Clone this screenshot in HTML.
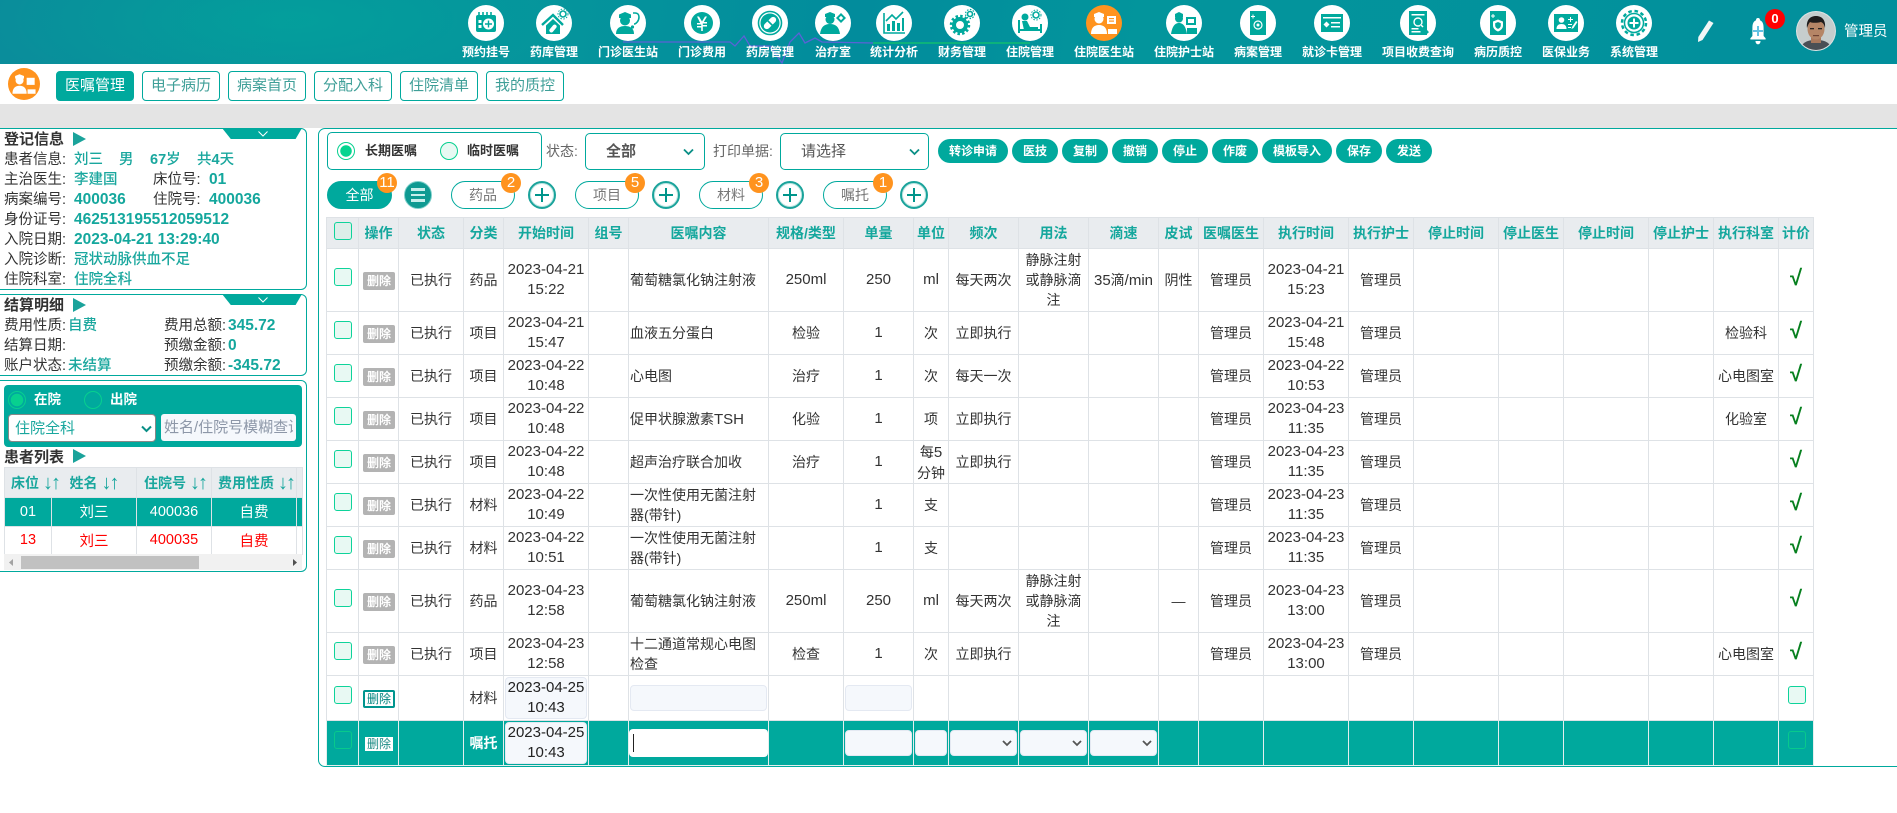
<!DOCTYPE html>
<html lang="zh-CN"><head><meta charset="utf-8"><title>住院医生站</title>
<style>
*{box-sizing:border-box}
html,body{margin:0;padding:0;background:#fff}
body{width:1897px;height:813px;overflow:hidden;position:relative;font-family:"Liberation Sans","Noto Sans CJK SC",sans-serif;font-size:14px;color:#333}
.a{position:absolute}
#top{left:0;top:0;width:1897px;height:64px;background:radial-gradient(ellipse 300px 90px at 290px 20px,rgba(0,170,155,.55),transparent),linear-gradient(100deg,#0a8d9b 0,#05949c 30%,#028c9c 45%,#03959c 60%,#028f9c 100%);overflow:hidden}
.n{position:absolute;top:5px;width:100px;margin-left:-50px;text-align:center;color:#fff;font-size:12px;font-weight:700;line-height:16px}
.n svg{display:block;margin:0 auto 3px;width:36px;height:36px;border-radius:50%;background:#fff;fill:#00a99d;stroke:none}
.n svg.o{background:#ff931e;fill:#fff}
.n svg .s{fill:none;stroke:#00a99d;stroke-width:1.6}
.n svg .w{fill:#fff}
.n svg .t{fill:#00a99d}
.o .w{fill:#ff931e!important}
.tab{position:absolute;top:71px;width:78px;height:30px;border:1px solid #00a99d;border-radius:4px;color:#3f9f98;font-size:15px;line-height:28px;text-align:center}
.tab.on{background:#00a99d;color:#fff}
.box{position:absolute;left:0;width:307px;border:1px solid #00a99d;border-left:0;border-radius:0 6px 6px 0}
.trap{position:absolute;left:222px;width:80px;height:11px;background:#00a99d;clip-path:polygon(0 0,100% 0,92% 100%,11% 100%)}
.ch{position:absolute;width:10px;height:6px}
.tri{position:absolute;left:73px;width:0;height:0;border-left:13px solid #1aa39b;border-top:7px solid transparent;border-bottom:7px solid transparent}
.l{position:absolute;font-size:14.5px;line-height:20px;white-space:nowrap;color:#333}
.h{position:absolute;left:4px;font-size:15px;line-height:20px;font-weight:700;color:#333;white-space:nowrap}
.v{position:absolute;font-size:14.5px;line-height:20px;white-space:nowrap;color:#1aa79e;font-weight:500}
.vb{font-weight:700;font-size:15.5px;color:#14a79d}
#pt{position:absolute;left:4px;top:467px;width:298px;border-collapse:collapse;table-layout:fixed}
#pt th{height:30px;background:#e9ecef;color:#1aa79e;font-size:14px;font-weight:700;padding:0;border:1px solid #dee2e6;white-space:nowrap;text-align:left}
#pt th i{font-style:normal;font-weight:400;font-size:20px;letter-spacing:-2px;margin-left:4px;line-height:14px;vertical-align:-1px}
#pt td{padding:0;text-align:center;font-size:14.5px;border:1px solid #dee2e6;height:28.5px}
#pp::placeholder{color:#8d97a8}
.sel{position:absolute;top:133px;height:37px;border:1px solid #00a99d;border-radius:5px;appearance:none;-webkit-appearance:none;background:#fff;font:15px "Liberation Sans","Noto Sans CJK SC",sans-serif;color:#555;padding:0 0 0 20px;margin:0}
.btn{position:absolute;top:139px;height:24px;border-radius:12px;background:#00a99d;color:#fff;font-size:12px;font-weight:700;line-height:24px;text-align:center}
.pill{position:absolute;top:181px;width:64px;height:28px;border:1px solid #00a99d;border-radius:14px;color:#777;font-size:14px;line-height:27px;text-align:center}
.bd{position:absolute;top:173px;width:20px;height:20px;margin-left:-10px;border-radius:50%;background:#ff931e;color:#fff;font-size:15px;line-height:20px;text-align:center}
.pl{position:absolute;top:181px;width:28px;height:28px;margin-left:-14px;border-radius:50%;border:2px solid #1aa39b;outline:0;box-shadow:inset 0 0 0 1px #bfe7e3}
.pl:before,.pl:after{content:"";position:absolute;background:#00958b}
.pl:before{left:5px;right:5px;top:11px;height:2px}
.pl:after{top:5px;bottom:5px;left:11px;width:2px}
#t{position:absolute;left:326px;top:217px;width:1487px;border-collapse:collapse;table-layout:fixed}
#t th{background:#e9ecef;color:#14a79d;font-weight:700;font-size:14px;padding:0;border:1px solid #dee2e6;height:31px;white-space:nowrap;overflow:hidden}
#t td{padding:0 2px;border:1px solid #dee2e6;text-align:center;vertical-align:middle;line-height:20px;font-size:14px;color:#333;position:relative}
#t td.c{text-align:left;padding:0 8px 0 1px}
#t .d,#t .la{font-size:15px}
#t tr.r43 td{height:43px}#t tr.r63 td{height:63px}#t tr.r45 td{height:45px}
#t tr.sel1 td{background:#00a99d;color:#fff;border-color:#e4efee}
.cb{position:absolute;left:7px;top:50%;margin-top:-12.5px;width:18px;height:18px;border:1.5px solid #0ed39a;border-radius:3px;background:#e8f9f3}
.cb.e{background:transparent;border-color:#08c98c}
.del{position:absolute;left:4px;top:50%;margin-top:-8.5px;width:32px;height:18px;border-radius:2px;background:#b3b3b3;color:#fff;font-size:12px;font-weight:700;line-height:18px;text-align:center}
.del.b{background:#fff;border:2px solid #00958f;color:#00857f;line-height:14px;font-weight:400}
.del.w{left:6px;width:28px;height:14px;margin-top:-6px;background:#fff;color:#1c8b85;line-height:14px;border-radius:0;font-weight:400}
.ok{color:#07801f;font-size:22px;font-weight:700;line-height:20px;display:block;margin-top:-5px}
.ip{position:absolute;background:#f5f8fc;border:1px solid #e4e9f2;border-radius:4px;margin:0;padding:0;font:15px/20px "Liberation Sans","Noto Sans CJK SC",sans-serif;color:#222;text-align:center}
.ip.s{appearance:none;-webkit-appearance:none}
</style></head><body>

<div class="a" id="top">
<svg class="a" style="left:0;top:0" width="1100" height="64" fill="none"><polyline points="623,42 730,42 735,46 744,36 750,46 770,46 782,63 790,42 799,33 805,43 815,38 822,42 873,43" stroke="#5a62d6" stroke-width="1.3"/><polyline points="873,43 1030,43" stroke="#12c76a" stroke-width="1.3"/></svg>

<div class="n" style="left:486px"><svg viewBox="0 0 36 36"><rect x="8" y="10" width="20" height="17" rx="2"/><path class="s" d="M11 7v5M15 7v5M19 7v5M23 7v5" stroke-width="1.5"/><rect class="w" x="10.500" y="15" width="3" height="3"/><rect class="w" x="10.500" y="20" width="3" height="3"/><circle class="w" cx="20.500" cy="19" r="5.500"/><path class="t" d="M19.800 15.500h1.400v2.800H24v1.400h-2.800v2.800h-1.400v-2.800H17v-1.400h2.800z"/></svg>预约挂号</div>

<div class="n" style="left:554px"><svg viewBox="0 0 36 36"><path class="s" style="stroke-width:2.400" d="M6 20 17 10l10 10"/><path d="M10 20.500 17 14l7 6.500V29H10z"/><rect class="w" x="15" y="19" width="4" height="9" rx="2" transform="rotate(40 17 23.500)"/><circle class="s" cx="27" cy="9" r="3"/><circle class="s" cx="27" cy="9" r="5" stroke-dasharray="1.500 1.500" style="stroke-width:1"/></svg>药库管理</div>

<div class="n" style="left:628px"><svg viewBox="0 0 36 36"><path d="M9 9.500 15 7l6 2.500V13H9z"/><circle cx="15" cy="15.500" r="5"/><path d="M6 29c0-6 4-8 9-8s9 2 9 8z"/><path class="s" d="M23 8h2c3 0 4 2 4 4 0 4-3 7-5 7"/><circle cx="22.500" cy="22" r="1.600"/></svg>门诊医生站</div>

<div class="n" style="left:702px"><svg viewBox="0 0 36 36"><circle cx="18" cy="18" r="11"/><path class="w" d="M13 11.500h2l3 5 3-5h2l-3.200 5.500H23v1.500h-4.200v1.500H23v1.500h-4.200V26h-1.600v-3.500H13V21h4.200v-1.500H13V18h3.200z"/></svg>门诊费用</div>

<div class="n" style="left:770px"><svg viewBox="0 0 36 36"><circle class="s" cx="18" cy="18" r="11.500"/><circle cx="18" cy="18" r="9.500"/><rect class="w" x="15" y="10.500" width="6" height="15" rx="3" transform="rotate(45 18 18)"/><path class="s" d="M15 15l6 6"/></svg>药房管理</div>

<div class="n" style="left:833px"><svg viewBox="0 0 36 36"><path d="M10 9 15 7l5 2v3H10z"/><circle cx="15" cy="14.500" r="4.500"/><path d="M5 29c1-7 4-10 10-10s9 3 10 10z"/><path d="M26 8l5 5-5 5-5-5z"/><path class="w" d="M26 10.800l2.200 2.200-2.200 2.200-2.200-2.200z"/></svg>治疗室</div>

<div class="n" style="left:894px"><svg viewBox="0 0 36 36"><path class="s" d="M8 8v20h21"/><rect x="11" y="19" width="3" height="7"/><rect x="16" y="16" width="3" height="10"/><rect x="21" y="18" width="3" height="8"/><rect x="26" y="13" width="2" height="13"/><path class="s" d="M10 16l6-6 4 4 7-7"/></svg>统计分析</div>

<div class="n" style="left:962px"><svg viewBox="0 0 36 36"><circle class="s" cx="16" cy="20" r="6" style="stroke-width:4"/><circle class="s" cx="16" cy="20" r="9" style="stroke-width:2.500" stroke-dasharray="2.500 2.200"/><circle class="s" cx="26" cy="9" r="2.500"/><circle class="s" cx="26" cy="9" r="4.500" style="stroke-width:1.200" stroke-dasharray="1.500 1.500"/></svg>财务管理</div>

<div class="n" style="left:1030px"><svg viewBox="0 0 36 36"><circle cx="13" cy="12" r="3.500"/><path d="M10 16h5l3 6h8v3H12z"/><path class="s" style="stroke-width:2" d="M7 15v13M7 25h22v3M29 19v9"/><circle class="s" cx="24" cy="10" r="3"/><circle class="s" cx="24" cy="10" r="5" style="stroke-width:1" stroke-dasharray="1.500 1.500"/></svg>住院管理</div>

<div class="n" style="left:1104px"><svg class="o" viewBox="0 0 36 36"><path d="M8 9l5-2 5 2v3H8z"/><circle cx="13" cy="14" r="4.500"/><path d="M5 29c0-6 3-9 8-9s8 3 8 9z"/><rect x="21" y="11" width="9" height="8"/><rect class="w" x="23" y="13" width="5" height="1.200"/><rect class="w" x="23" y="15.500" width="5" height="1.200"/><rect x="22" y="24" width="9" height="5"/></svg>住院医生站</div>

<div class="n" style="left:1184px"><svg viewBox="0 0 36 36"><path d="M9 9l4-2 4 2v3H9z"/><circle cx="13" cy="13.500" r="4"/><path d="M5 29c1-6 3-11 8-11s7 5 8 11z"/><rect x="20" y="12" width="10" height="8"/><rect class="w" x="22" y="14" width="6" height="4"/><rect x="21" y="23" width="10" height="6"/></svg>住院护士站</div>

<div class="n" style="left:1258px"><svg viewBox="0 0 36 36"><rect x="10" y="6" width="16" height="24"/><path class="w" d="M12.500 9.500h1v1.500H15v1h-1.500v1.500h-1V12H11v-1h1.500z"/><circle cx="18" cy="20" r="4" fill="none" stroke="#fff" stroke-width="1.200"/><circle class="w" cx="18" cy="20" r="1.500"/></svg>病案管理</div>

<div class="n" style="left:1332px"><svg viewBox="0 0 36 36"><rect x="7" y="9" width="22" height="18"/><rect class="w" x="9" y="12" width="18" height="1.500"/><path class="w" d="M12.500 16.500l3 3-3 3-3-3z"/><rect class="w" x="17" y="17" width="9" height="1.500"/><rect class="w" x="17" y="21" width="9" height="1.500"/></svg>就诊卡管理</div>

<div class="n" style="left:1418px"><svg viewBox="0 0 36 36"><rect x="9" y="6" width="18" height="24"/><rect class="w" x="11.500" y="9" width="13" height="1.500"/><circle cx="18" cy="17" r="4" fill="none" stroke="#fff" stroke-width="1.400"/><path d="M21 20l7 8" stroke="#00a99d" stroke-width="2.500"/><path d="M21 20l2 2" stroke="#fff" stroke-width="1.500"/><rect class="w" x="11.500" y="23" width="7" height="1.500"/><rect class="w" x="11.500" y="26" width="9" height="1.500"/></svg>项目收费查询</div>

<div class="n" style="left:1498px"><svg viewBox="0 0 36 36"><rect x="10" y="6" width="16" height="24"/><path class="w" d="M12.500 9h1v1.500H15v1h-1.500V13h-1v-1.500H11v-1h1.500z"/><path class="w" d="M18 14.500l5 2v4c0 3-2.500 5-5 6-2.500-1-5-3-5-6v-4z"/><path class="t" d="M18 17l2.800 1.200v2.300c0 1.600-1.400 2.800-2.800 3.400-1.400-.6-2.800-1.800-2.800-3.400v-2.300z"/></svg>病历质控</div>

<div class="n" style="left:1566px"><svg viewBox="0 0 36 36"><rect x="6" y="9" width="24" height="18"/><circle class="w" cx="13.500" cy="15" r="2.800"/><path class="w" d="M8.500 24c0-3.500 2-5 5-5s5 1.500 5 5z"/><path class="w" d="M22 12h1v2h2v1h-2v2h-1v-2h-2v-1h2z"/><rect class="w" x="20" y="19" width="4" height="1"/><rect class="w" x="20" y="22" width="3" height="1"/><path class="w" d="M28 16l1.500 1-4 6-2 1 .5-2z"/></svg>医保业务</div>

<div class="n" style="left:1634px"><svg viewBox="0 0 36 36"><circle class="s" cx="18" cy="18" r="9.500" style="stroke-width:1.500"/><circle class="s" cx="18" cy="18" r="12" style="stroke-width:2.500" stroke-dasharray="3.500 2.800"/><circle cx="18" cy="18" r="6.500"/><path class="w" d="M17 13.500h2V17h3.500v2H19v3.500h-2V19h-3.500v-2H17z"/></svg>系统管理</div>

<svg class="a" style="left:1696px;top:19px" width="20" height="25"><path d="M13 1.500l4.500 2.500-11 17-4.500 2 .3-5z" fill="#f2f6f6"/></svg>
<svg class="a" style="left:1747px;top:17px" width="22" height="28"><path d="M11 1c1.500 0 2 1 2 2.200 3 1.300 3.600 4.300 3.600 8v7.800l2 2.200v1.300H3.400v-1.300l2-2.200v-7.800c0-3.700.6-6.700 3.600-8C9 2 9.500 1 11 1z" fill="#fff"/><path d="M8.500 24h5c0 2-1 3.300-2.500 3.300S8.500 26 8.500 24z" fill="#fff"/><path d="M10 9h2v4h4v2h-4v4h-2v-4H6v-2h4z" fill="#63c2e4"/></svg>
<div class="a" style="left:1765px;top:9px;width:20px;height:20px;border-radius:50%;background:#f00;color:#fff;font-size:13px;font-weight:700;line-height:20px;text-align:center">0</div>
<svg class="a" style="left:1796px;top:11px" width="40" height="40"><defs><clipPath id="av"><circle cx="20" cy="20" r="19"/></clipPath></defs><circle cx="20" cy="20" r="20" fill="#dfe3e3"/><g clip-path="url(#av)"><rect width="40" height="40" fill="#c6cdcd"/><path d="M4 40c1-9 8-11 16-11s15 2 16 11z" fill="#4a4f55"/><rect x="15" y="24" width="10" height="8" fill="#a9785c"/><ellipse cx="20" cy="18" rx="8.500" ry="10.500" fill="#b58566"/><path d="M11 17c-1-9 4-12 9-12s10 3 9 12c-1-4-2-5-4-6-4 1-9 1-11 0-1 1-2 3-3 6z" fill="#1f1c1c"/><rect x="14" y="17" width="4" height="1.300" fill="#2a2320"/><rect x="22" y="17" width="4" height="1.300" fill="#2a2320"/><rect x="17" y="24" width="6" height="1.200" fill="#6e4233"/></g></svg>
<div class="a" style="left:1844px;top:21px;color:#fff;font-size:14.5px;line-height:22px;white-space:nowrap">管理员</div>
</div>

<svg class="a" style="left:8px;top:68px;border-radius:50%;background:#ff931e" width="32" height="32" viewBox="0 0 36 36" fill="#fff"><path d="M8 9l5-2 5 2v3H8z"/><circle cx="13" cy="14" r="4.500"/><path d="M5 29c0-6 3-9 8-9s8 3 8 9z"/><rect x="21" y="11" width="9" height="8"/><rect x="22" y="24" width="9" height="5"/></svg>
<div class="tab on" style="left:56px">医嘱管理</div>
<div class="tab" style="left:142px">电子病历</div>
<div class="tab" style="left:228px">病案首页</div>
<div class="tab" style="left:314px">分配入科</div>
<div class="tab" style="left:400px">住院清单</div>
<div class="tab" style="left:486px">我的质控</div>

<div class="a" style="left:0;top:104px;width:1897px;height:24px;background:#e4e4e4"></div>

<!-- left: registration -->
<div class="box" style="top:128px;height:162px"></div>
<div class="trap" style="top:128px"></div>
<svg class="ch" style="left:258px;top:131px"><path d="M.5 .5 5 5l4.500-4.500" fill="none" stroke="#fff"/></svg>
<div class="h" style="top:130px">登记信息</div><div class="tri" style="top:132px"></div>
<div class="l" style="left:4px;top:150px">患者信息:</div><div class="v" style="left:74px;top:150px">刘三</div><div class="v" style="left:119px;top:150px">男</div><div class="v" style="left:150px;top:150px"><b>67</b>岁</div><div class="v" style="left:197px;top:150px">共<b>4</b>天</div>
<div class="l" style="left:4px;top:170px">主治医生:</div><div class="v" style="left:74px;top:170px">李建国</div><div class="l" style="left:153px;top:170px">床位号:</div><div class="v vb" style="left:209px;top:170px">01</div>
<div class="l" style="left:4px;top:190px">病案编号:</div><div class="v vb" style="left:74px;top:190px">400036</div><div class="l" style="left:153px;top:190px">住院号:</div><div class="v vb" style="left:209px;top:190px">400036</div>
<div class="l" style="left:4px;top:210px">身份证号:</div><div class="v vb" style="left:74px;top:210px">462513195512059512</div>
<div class="l" style="left:4px;top:230px">入院日期:</div><div class="v vb" style="left:74px;top:230px">2023-04-21 13:29:40</div>
<div class="l" style="left:4px;top:250px">入院诊断:</div><div class="v" style="left:74px;top:250px">冠状动脉供血不足</div>
<div class="l" style="left:4px;top:270px">住院科室:</div><div class="v" style="left:74px;top:270px">住院全科</div>

<!-- left: settlement -->
<div class="box" style="top:294px;height:82px"></div>
<div class="trap" style="top:294px"></div>
<svg class="ch" style="left:258px;top:297px"><path d="M.5 .5 5 5l4.500-4.500" fill="none" stroke="#fff"/></svg>
<div class="h" style="top:296px">结算明细</div><div class="tri" style="top:298px"></div>
<div class="l" style="left:4px;top:316px">费用性质:</div><div class="v" style="left:68px;top:316px">自费</div><div class="l" style="left:164px;top:316px">费用总额:</div><div class="v vb" style="left:228px;top:316px">345.72</div>
<div class="l" style="left:4px;top:336px">结算日期:</div><div class="l" style="left:164px;top:336px">预缴金额:</div><div class="v vb" style="left:228px;top:336px">0</div>
<div class="l" style="left:4px;top:356px">账户状态:</div><div class="v" style="left:68px;top:356px">未结算</div><div class="l" style="left:164px;top:356px">预缴余额:</div><div class="v vb" style="left:228px;top:356px">-345.72</div>

<!-- left: patients -->
<div class="box" style="top:380px;height:192px"></div>
<div class="a" style="left:4px;top:385px;width:298px;height:62px;background:#00a99d;border-radius:4px"></div>
<div class="a" style="left:8px;top:391px;width:18px;height:18px;border-radius:50%;border:1px solid #07d08f;background:radial-gradient(circle,#07d08f 0 6px,#00a99d 6.500px)"></div>
<div class="a" style="left:34px;top:390px;color:#fff;font-weight:700;font-size:13.500px;line-height:20px">在院</div>
<div class="a" style="left:84px;top:391px;width:18px;height:18px;border-radius:50%;border:1px solid #07d08f"></div>
<div class="a" style="left:110px;top:390px;color:#fff;font-weight:700;font-size:13.500px;line-height:20px">出院</div>
<select class="a" style="left:8px;top:414px;width:148px;height:28px;border:1px solid #888;border-radius:4px;background:#fff;color:#1aa79e;font:15px 'Liberation Sans','Noto Sans CJK SC',sans-serif;padding:0 0 0 6px;margin:0;appearance:none;-webkit-appearance:none"><option>住院全科</option></select>
<svg class="a" style="left:141px;top:425px" width="11" height="8"><path d="M1 1.500l4.500 4.500L10 1.500" fill="none" stroke="#0a8f86" stroke-width="2"/></svg>
<input id="pp" class="a" style="left:161px;top:414px;width:135px;height:27px;border:0;border-radius:3px;background:#f5f8fc;font:15px 'Liberation Sans','Noto Sans CJK SC',sans-serif;padding:0 3px;margin:0" placeholder="姓名/住院号模糊查询">
<div class="h" style="top:448px">患者列表</div><div class="tri" style="top:449px"></div>
<table id="pt"><colgroup><col style="width:47px"><col style="width:85px"><col style="width:75px"><col style="width:85px"><col style="width:6px"></colgroup>
<tr><th style="padding-left:6px;border-right:0">床位<i>↓↑</i></th><th style="padding-left:18px;border-left:0">姓名<i>↓↑</i></th><th style="padding-left:7px">住院号<i>↓↑</i></th><th style="padding-left:6px">费用性质<i>↓↑</i></th><th></th></tr>
<tr style="background:#00a99d;color:#fff"><td>01</td><td>刘三</td><td>400036</td><td>自费</td><td></td></tr>
<tr style="color:#f00"><td>13</td><td>刘三</td><td>400035</td><td>自费</td><td></td></tr>
</table>
<div class="a" style="left:4px;top:554px;width:298px;height:16px;background:#f1f1f1"></div>
<div class="a" style="left:21px;top:556px;width:178px;height:13px;background:#c1c1c1"></div>
<svg class="a" style="left:8px;top:558px" width="8" height="9"><path d="M5 1 1 4.500 5 8z" fill="#a3a3a3"/></svg>
<svg class="a" style="left:291px;top:558px" width="8" height="9"><path d="M2 1l4 3.500L2 8z" fill="#505050"/></svg>

<!-- main panel -->
<div class="a" style="left:318px;top:128px;width:1600px;height:639px;border:1px solid #00a99d;border-radius:7px 0 0 7px"></div>

<div class="a" style="left:327px;top:132px;width:215px;height:38px;border:1px solid #00a99d;border-radius:5px"></div>
<div class="a" style="left:337px;top:142px;width:18px;height:18px;border-radius:50%;border:1.500px solid #07d08f;background:radial-gradient(circle,#04d48f 0 5.500px,#fff 6px)"></div>
<div class="a" style="left:365px;top:141px;font-size:13px;font-weight:700;line-height:20px;color:#333">长期医嘱</div>
<div class="a" style="left:440px;top:142px;width:18px;height:18px;border-radius:50%;border:1.500px solid #07d08f;background:#e8f9f3"></div>
<div class="a" style="left:467px;top:141px;font-size:13px;font-weight:700;line-height:20px;color:#333">临时医嘱</div>
<div class="a" style="left:546px;top:141px;color:#666;line-height:20px">状态:</div>
<select class="sel" style="left:585px;width:120px;font-weight:700"><option>全部</option></select>
<svg class="a" style="left:683px;top:148px" width="11" height="8"><path d="M1 1.500l4.500 4.500L10 1.500" fill="none" stroke="#0a8f86" stroke-width="1.800"/></svg>
<div class="a" style="left:713px;top:141px;color:#666;line-height:20px">打印单据:</div>
<select class="sel" style="left:780px;width:149px"><option>请选择</option></select>
<svg class="a" style="left:909px;top:148px" width="11" height="8"><path d="M1 1.500l4.500 4.500L10 1.500" fill="none" stroke="#0a8f86" stroke-width="1.800"/></svg>

<div class="btn" style="left:938px;width:70px">转诊申请</div>
<div class="btn" style="left:1012px;width:46px">医技</div>
<div class="btn" style="left:1062px;width:46px">复制</div>
<div class="btn" style="left:1112px;width:46px">撤销</div>
<div class="btn" style="left:1162px;width:46px">停止</div>
<div class="btn" style="left:1212px;width:46px">作废</div>
<div class="btn" style="left:1262px;width:70px">模板导入</div>
<div class="btn" style="left:1336px;width:46px">保存</div>
<div class="btn" style="left:1386px;width:46px">发送</div>

<div class="pill" style="left:327px;width:65px;background:#00a99d;color:#fff">全部</div>
<div class="bd" style="left:387px">11</div>
<div class="a" style="left:404px;top:181px;width:28px;height:28px;border-radius:50%;background:#0f9a92;border:1px solid #7fd0cb"></div>
<div class="a" style="left:411px;top:188px;width:14px;height:2.500px;background:#c9efec"></div>
<div class="a" style="left:411px;top:193.500px;width:14px;height:2.500px;background:#c9efec"></div>
<div class="a" style="left:411px;top:199px;width:14px;height:2.500px;background:#c9efec"></div>
<div class="pill" style="left:451px">药品</div><div class="bd" style="left:511px">2</div><div class="pl" style="left:542px"></div>
<div class="pill" style="left:575px">项目</div><div class="bd" style="left:635px">5</div><div class="pl" style="left:666px"></div>
<div class="pill" style="left:699px">材料</div><div class="bd" style="left:759px">3</div><div class="pl" style="left:790px"></div>
<div class="pill" style="left:823px">嘱托</div><div class="bd" style="left:883px">1</div><div class="pl" style="left:914px"></div>

<table id="t"><colgroup><col style="width:32px"><col style="width:40px"><col style="width:65px"><col style="width:40px"><col style="width:85px"><col style="width:40px"><col style="width:140px"><col style="width:75px"><col style="width:70px"><col style="width:35px"><col style="width:70px"><col style="width:70px"><col style="width:70px"><col style="width:40px"><col style="width:65px"><col style="width:85px"><col style="width:65px"><col style="width:85px"><col style="width:65px"><col style="width:85px"><col style="width:65px"><col style="width:65px"><col style="width:35px"></colgroup>
<tr><th style="position:relative"><span class="cb" style="top:4px;margin:0;background:#dceee9"></span></th><th>操作</th><th>状态</th><th>分类</th><th>开始时间</th><th>组号</th><th>医嘱内容</th><th>规格/类型</th><th>单量</th><th>单位</th><th>频次</th><th>用法</th><th>滴速</th><th>皮试</th><th>医嘱医生</th><th>执行时间</th><th>执行护士</th><th>停止时间</th><th>停止医生</th><th>停止时间</th><th>停止护士</th><th>执行科室</th><th>计价</th></tr>

<tr class="r63"><td><span class="cb"></span></td><td><span class="del">删除</span></td><td>已执行</td><td>药品</td><td class="d">2023-04-21<br>15:22</td><td></td><td class="c">葡萄糖氯化钠注射液</td><td class="la">250ml</td><td class="la">250</td><td class="la">ml</td><td>每天两次</td><td>静脉注射<br>或静脉滴<br>注</td><td><span class="la">35</span>滴<span class="la">/min</span></td><td>阴性</td><td>管理员</td><td class="d">2023-04-21<br>15:23</td><td>管理员</td><td></td><td></td><td></td><td></td><td></td><td><span class="ok">√</span></td></tr>

<tr class="r43"><td><span class="cb"></span></td><td><span class="del">删除</span></td><td>已执行</td><td>项目</td><td class="d">2023-04-21<br>15:47</td><td></td><td class="c">血液五分蛋白</td><td>检验</td><td class="la">1</td><td>次</td><td>立即执行</td><td></td><td></td><td></td><td>管理员</td><td class="d">2023-04-21<br>15:48</td><td>管理员</td><td></td><td></td><td></td><td></td><td>检验科</td><td><span class="ok">√</span></td></tr>

<tr class="r43"><td><span class="cb"></span></td><td><span class="del">删除</span></td><td>已执行</td><td>项目</td><td class="d">2023-04-22<br>10:48</td><td></td><td class="c">心电图</td><td>治疗</td><td class="la">1</td><td>次</td><td>每天一次</td><td></td><td></td><td></td><td>管理员</td><td class="d">2023-04-22<br>10:53</td><td>管理员</td><td></td><td></td><td></td><td></td><td>心电图室</td><td><span class="ok">√</span></td></tr>

<tr class="r43"><td><span class="cb"></span></td><td><span class="del">删除</span></td><td>已执行</td><td>项目</td><td class="d">2023-04-22<br>10:48</td><td></td><td class="c">促甲状腺激素<span class="la">TSH</span></td><td>化验</td><td class="la">1</td><td>项</td><td>立即执行</td><td></td><td></td><td></td><td>管理员</td><td class="d">2023-04-23<br>11:35</td><td>管理员</td><td></td><td></td><td></td><td></td><td>化验室</td><td><span class="ok">√</span></td></tr>

<tr class="r43"><td><span class="cb"></span></td><td><span class="del">删除</span></td><td>已执行</td><td>项目</td><td class="d">2023-04-22<br>10:48</td><td></td><td class="c">超声治疗联合加收</td><td>治疗</td><td class="la">1</td><td>每<span class="la">5</span><br>分钟</td><td>立即执行</td><td></td><td></td><td></td><td>管理员</td><td class="d">2023-04-23<br>11:35</td><td>管理员</td><td></td><td></td><td></td><td></td><td></td><td><span class="ok">√</span></td></tr>

<tr class="r43"><td><span class="cb"></span></td><td><span class="del">删除</span></td><td>已执行</td><td>材料</td><td class="d">2023-04-22<br>10:49</td><td></td><td class="c">一次性使用无菌注射<br>器(带针)</td><td></td><td class="la">1</td><td>支</td><td></td><td></td><td></td><td></td><td>管理员</td><td class="d">2023-04-23<br>11:35</td><td>管理员</td><td></td><td></td><td></td><td></td><td></td><td><span class="ok">√</span></td></tr>

<tr class="r43"><td><span class="cb"></span></td><td><span class="del">删除</span></td><td>已执行</td><td>材料</td><td class="d">2023-04-22<br>10:51</td><td></td><td class="c">一次性使用无菌注射<br>器(带针)</td><td></td><td class="la">1</td><td>支</td><td></td><td></td><td></td><td></td><td>管理员</td><td class="d">2023-04-23<br>11:35</td><td>管理员</td><td></td><td></td><td></td><td></td><td></td><td><span class="ok">√</span></td></tr>

<tr class="r63"><td><span class="cb"></span></td><td><span class="del">删除</span></td><td>已执行</td><td>药品</td><td class="d">2023-04-23<br>12:58</td><td></td><td class="c">葡萄糖氯化钠注射液</td><td class="la">250ml</td><td class="la">250</td><td class="la">ml</td><td>每天两次</td><td>静脉注射<br>或静脉滴<br>注</td><td></td><td>—</td><td>管理员</td><td class="d">2023-04-23<br>13:00</td><td>管理员</td><td></td><td></td><td></td><td></td><td></td><td><span class="ok">√</span></td></tr>

<tr class="r43"><td><span class="cb"></span></td><td><span class="del">删除</span></td><td>已执行</td><td>项目</td><td class="d">2023-04-23<br>12:58</td><td></td><td class="c">十二通道常规心电图<br>检查</td><td>检查</td><td class="la">1</td><td>次</td><td>立即执行</td><td></td><td></td><td></td><td>管理员</td><td class="d">2023-04-23<br>13:00</td><td>管理员</td><td></td><td></td><td></td><td></td><td>心电图室</td><td><span class="ok">√</span></td></tr>

<tr class="r45"><td><span class="cb"></span></td><td><span class="del b">删除</span></td><td></td><td>材料</td><td></td><td></td><td></td><td></td><td></td><td></td><td></td><td></td><td></td><td></td><td></td><td></td><td></td><td></td><td></td><td></td><td></td><td></td><td><span class="cb" style="left:9px"></span></td></tr>

<tr class="r45 sel1"><td><span class="cb e"></span></td><td><span class="del w">删除</span></td><td></td><td style="font-weight:700">嘱托</td><td></td><td></td><td></td><td></td><td></td><td></td><td></td><td></td><td></td><td></td><td></td><td></td><td></td><td></td><td></td><td></td><td></td><td></td><td><span class="cb e" style="left:9px"></span></td></tr>
</table>

<!-- row 10 inputs -->
<div class="ip" style="left:505px;top:677px;width:82px;height:42px">2023-04-25<br>10:43</div>
<input class="ip" style="left:630px;top:685px;width:137px;height:26px">
<input class="ip" style="left:845px;top:685px;width:67px;height:26px">
<!-- row 11 inputs -->
<div class="ip" style="left:505px;top:722px;width:82px;height:42px">2023-04-25<br>10:43</div>
<input class="ip" style="left:629px;top:729px;width:139px;height:28px;background:#fff;border:0">
<div class="a" style="left:633px;top:734px;width:1px;height:18px;background:#222"></div>
<input class="ip" style="left:845px;top:730px;width:67px;height:26px">
<input class="ip" style="left:915px;top:730px;width:32px;height:26px">
<select class="ip s" style="left:950px;top:730px;width:67px;height:26px"></select>
<select class="ip s" style="left:1020px;top:730px;width:67px;height:26px"></select>
<select class="ip s" style="left:1090px;top:730px;width:67px;height:26px"></select>
<svg class="a" style="left:1002px;top:740px" width="10" height="7"><path d="M1 1l4 4 4-4" fill="none" stroke="#555" stroke-width="1.800"/></svg>
<svg class="a" style="left:1072px;top:740px" width="10" height="7"><path d="M1 1l4 4 4-4" fill="none" stroke="#555" stroke-width="1.800"/></svg>
<svg class="a" style="left:1142px;top:740px" width="10" height="7"><path d="M1 1l4 4 4-4" fill="none" stroke="#555" stroke-width="1.800"/></svg>
</body></html>
